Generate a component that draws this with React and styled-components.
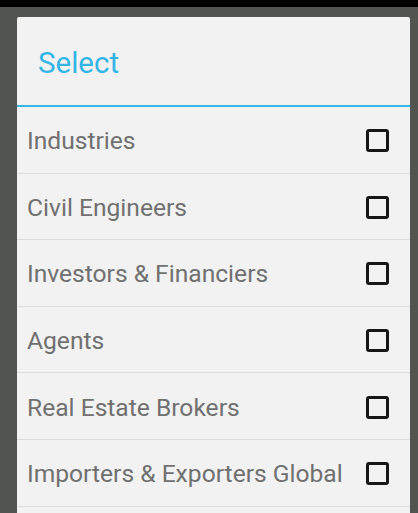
import React, { useState } from 'react';
import styled, { createGlobalStyle } from 'styled-components';

const items = [
  'Industries',
  'Civil Engineers',
  'Investors & Financiers',
  'Agents',
  'Real Estate Brokers',
  'Importers & Exporters Global',
];

const GlobalStyle = createGlobalStyle`
  html, body {
    margin: 0;
    padding: 0;
    height: 100%;
    overflow: hidden;
    background: #52554f;
    font-family: Roboto, "Liberation Sans", sans-serif;
  }
`;

const Screen = styled.div`
  display: flex;
  flex-direction: column;
  height: 100vh;
`;

const StatusBar = styled.div`
  height: 7px;
  background: #000;
  flex-shrink: 0;
`;

// dialog runs past the bottom of the screen
const Dialog = styled.div`
  flex: 1;
  margin: 10px 8px 0 17px;
  background: #f2f2f2;
  border-radius: 2px 2px 0 0;
  display: flex;
  flex-direction: column;
`;

const Header = styled.div`
  height: 90px;
  padding: 3px 0 0 21px;
  box-sizing: border-box;
  display: flex;
  align-items: center;
  border-bottom: 2px solid #33b5e5;
  flex-shrink: 0;
`;

const Title = styled.h2`
  margin: 0;
  font-size: 29.5px;
  font-weight: 400;
  color: #33b5e5;
`;

const List = styled.ul`
  list-style: none;
  margin: 0;
  padding: 0;
`;

const Row = styled.li`
  height: 66.6px;
  box-sizing: border-box;
  display: flex;
  align-items: center;
  justify-content: space-between;
  padding: 2px 21px 0 10px;
  border-bottom: 1px solid #dcdcdc;
  cursor: pointer;
`;

const Label = styled.span`
  font-size: 24.6px;
  color: #707070;
  white-space: nowrap;
`;

const Box = styled.span`
  width: 23px;
  height: 23px;
  box-sizing: border-box;
  border: 3px solid #161616;
  border-radius: 3px;
  flex-shrink: 0;
  background: ${({ $checked }) => ($checked ? '#33b5e5' : 'transparent')};
`;

const App = () => {
  const [checked, setChecked] = useState({});

  const toggle = (name) => {
    setChecked((prev) => ({ ...prev, [name]: !prev[name] }));
  };

  return (
    <Screen>
      <GlobalStyle />
      <StatusBar />
      <Dialog>
        <Header>
          <Title>Select</Title>
        </Header>
        <List>
          {items.map((name) => (
            <Row key={name} onClick={() => toggle(name)}>
              <Label>{name}</Label>
              <Box $checked={!!checked[name]} />
            </Row>
          ))}
        </List>
      </Dialog>
    </Screen>
  );
};

export default App;
